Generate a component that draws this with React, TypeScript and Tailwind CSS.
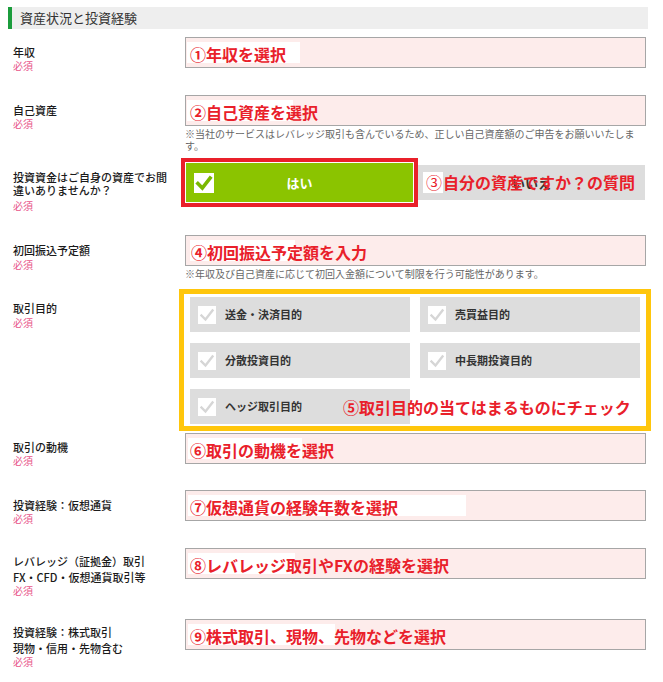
import React from "react";

function Required({ className = "" }: { className?: string }) {
  return <p className={`text-[10px] font-normal leading-[12px] text-[#e8558a] ${className}`}>必須</p>;
}

function Annotation({ text, bg }: { text: string; bg: string }) {
  return (
    <div className={`h-[21px] bg-white ${bg}`}>
      <span className="whitespace-nowrap text-[16px] font-bold leading-[21px] text-[#e9202a]">{text}</span>
    </div>
  );
}

function SelectBox({ text, bg }: { text: string; bg: string }) {
  return (
    <div className="flex h-[31px] items-center border border-[#a6a6a6] bg-[#fdeceb]">
      <Annotation text={text} bg={bg} />
    </div>
  );
}

function Note({ children }: { children: React.ReactNode }) {
  return <p className="mt-[2px] text-[10px] font-normal leading-[12px] text-[#666]">{children}</p>;
}

function Check({ color, width }: { color: string; width: number }) {
  return (
    <svg viewBox="0 0 18 18" className="h-full w-full">
      <polyline points="3.5,9.5 7.5,13.5 14.5,4.5" fill="none" stroke={color} strokeWidth={width} strokeLinecap="square" />
    </svg>
  );
}

function Purpose({ label }: { label: string }) {
  return (
    <div className="flex h-[35px] w-[220px] items-center bg-[#dddddd] pl-[8px]">
      <div className="h-[18px] w-[18px] bg-white">
        <Check color="#d6d6d6" width={2.4} />
      </div>
      <span className="ml-[9px] text-[11px] font-bold text-[#333]">{label}</span>
    </div>
  );
}

export default function App() {
  return (
    <div className="min-h-screen bg-white pt-[7px] font-['Noto_Sans_CJK_JP',sans-serif] font-medium text-[#1a1a1a]">
      {/* Section header */}
      <div className="ml-[8px] flex h-[22px] w-[640px] items-center border-l-4 border-[#1b9c3c] bg-[#eeeeee] pl-[8px]">
        <h2 className="text-[13px] font-normal text-[#333]">資産状況と投資経験</h2>
      </div>

      <div className="mt-[8px]">
        {/* 年収 */}
        <div className="flex h-[58px]">
          <div className="w-[185px] shrink-0 pl-[13px] pt-[8px]">
            <p className="text-[11px] leading-[14px]">年収</p>
            <Required className="mt-[1px]" />
          </div>
          <div className="w-[461px]">
            <SelectBox text="①年収を選択" bg="ml-[1px] w-[113px] pl-[3px]" />
          </div>
        </div>

        {/* 自己資産 */}
        <div className="flex h-[63px]">
          <div className="w-[185px] shrink-0 pl-[13px] pt-[8px]">
            <p className="text-[11px] leading-[14px]">自己資産</p>
            <Required className="mt-[1px]" />
          </div>
          <div className="w-[461px]">
            <SelectBox text="②自己資産を選択" bg="ml-[1px] w-[106px] pl-[3px]" />
            <Note>※当社のサービスはレバレッジ取引も含んでいるため、正しい自己資産額のご申告をお願いいたします。</Note>
          </div>
        </div>

        {/* 自己資金確認 */}
        <div className="flex h-[77px]">
          <div className="w-[185px] shrink-0 pl-[13px] pt-[13px]">
            <p className="text-[11px] leading-[13px]">投資資金はご自身の資産でお間</p>
            <p className="text-[11px] leading-[13px]">違いありませんか？</p>
            <Required className="mt-[3px]" />
          </div>
          <div className="-ml-[4px] flex items-start">
            <div className="h-[49px] w-[237px] border-4 border-[#e9202a] bg-white p-[1px]">
              <div className="flex h-full items-center bg-[#8bc400] pl-[8px]">
                <div className="h-[20px] w-[20px] bg-white">
                  <Check color="#7ab800" width={3.2} />
                </div>
                <span className="flex-1 pr-[28px] text-center text-[13px] font-bold text-white">はい</span>
              </div>
            </div>
            <div className="mt-[7px] grid h-[35px] w-[227px] bg-[#dddddd]">
              <span className="col-start-1 row-start-1 self-center justify-self-center text-[13px] font-bold text-[#333]">いいえ</span>
              <div className="col-start-1 row-start-1 ml-[5px] flex items-center self-center whitespace-nowrap text-[16px] font-bold leading-[21px] text-[#e9202a]">
                <span className="inline-block w-[20px] bg-white pl-[3px] font-normal">③</span>
                <span>自分の資産ですか？の質問</span>
              </div>
            </div>
          </div>
        </div>

        {/* 初回振込予定額 */}
        <div className="flex h-[54px]">
          <div className="w-[185px] shrink-0 pl-[13px] pt-[8px]">
            <p className="text-[11px] leading-[14px]">初回振込予定額</p>
            <Required className="mt-[2px]" />
          </div>
          <div className="w-[461px]">
            <SelectBox text="④初回振込予定額を入力" bg="ml-[4px] w-[105px] pl-[1px]" />
            <Note>※年収及び自己資産に応じて初回入金額について制限を行う可能性があります。</Note>
          </div>
        </div>

        {/* 取引目的 */}
        <div className="flex h-[144px]">
          <div className="w-[185px] shrink-0 pl-[13px] pt-[12px]">
            <p className="text-[11px] leading-[14px]">取引目的</p>
            <Required className="mt-[2px]" />
          </div>
          <div className="-ml-[6px] h-[142px] w-[472px] border-[5px] border-[#ffc60b] px-[6px] pt-[3px]">
            <div className="grid grid-cols-[220px_220px] gap-x-[10px] gap-y-[11px]">
              <Purpose label="送金・決済目的" />
              <Purpose label="売買益目的" />
              <Purpose label="分散投資目的" />
              <Purpose label="中長期投資目的" />
              <div className="col-span-2 grid">
                <div className="col-start-1 row-start-1">
                  <Purpose label="ヘッジ取引目的" />
                </div>
                <span className="col-start-1 row-start-1 ml-[153px] self-center whitespace-nowrap text-[16px] font-bold text-[#e9202a]">
                  ⑤取引目的の当てはまるものにチェック
                </span>
              </div>
            </div>
          </div>
        </div>

        {/* 取引の動機 */}
        <div className="flex h-[57px]">
          <div className="w-[185px] shrink-0 pl-[13px] pt-[7px]">
            <p className="text-[11px] leading-[14px]">取引の動機</p>
            <Required className="mt-[1px]" />
          </div>
          <div className="w-[461px]">
            <SelectBox text="⑥取引の動機を選択" bg="ml-[2px] w-[114px] pl-[2px]" />
          </div>
        </div>

        {/* 投資経験：仮想通貨 */}
        <div className="flex h-[58px]">
          <div className="w-[185px] shrink-0 pl-[13px] pt-[8px]">
            <p className="text-[11px] leading-[14px]">投資経験：仮想通貨</p>
            <Required className="mt-[1px]" />
          </div>
          <div className="w-[461px]">
            <SelectBox text="⑦仮想通貨の経験年数を選択" bg="ml-[2px] w-[278px] pl-[2px]" />
          </div>
        </div>

        {/* レバレッジ */}
        <div className="flex h-[71px]">
          <div className="w-[185px] shrink-0 pl-[13px] pt-[5px]">
            <p className="text-[11px] leading-[16px]">レバレッジ（証拠金）取引</p>
            <p className="text-[11px] leading-[16px]">FX・CFD・仮想通貨取引等</p>
            <Required />
          </div>
          <div className="w-[461px]">
            <SelectBox text="⑧レバレッジ取引やFXの経験を選択" bg="ml-[2px] w-[107px] pl-[2px]" />
          </div>
        </div>

        {/* 株式取引 */}
        <div className="flex h-[63px]">
          <div className="w-[185px] shrink-0 pl-[13px] pt-[5px]">
            <p className="text-[11px] leading-[16px]">投資経験：株式取引</p>
            <p className="text-[11px] leading-[16px]">現物・信用・先物含む</p>
            <Required />
          </div>
          <div className="w-[461px]">
            <SelectBox text="⑨株式取引、現物、先物などを選択" bg="ml-[2px] w-[147px] pl-[2px]" />
          </div>
        </div>
      </div>
    </div>
  );
}
